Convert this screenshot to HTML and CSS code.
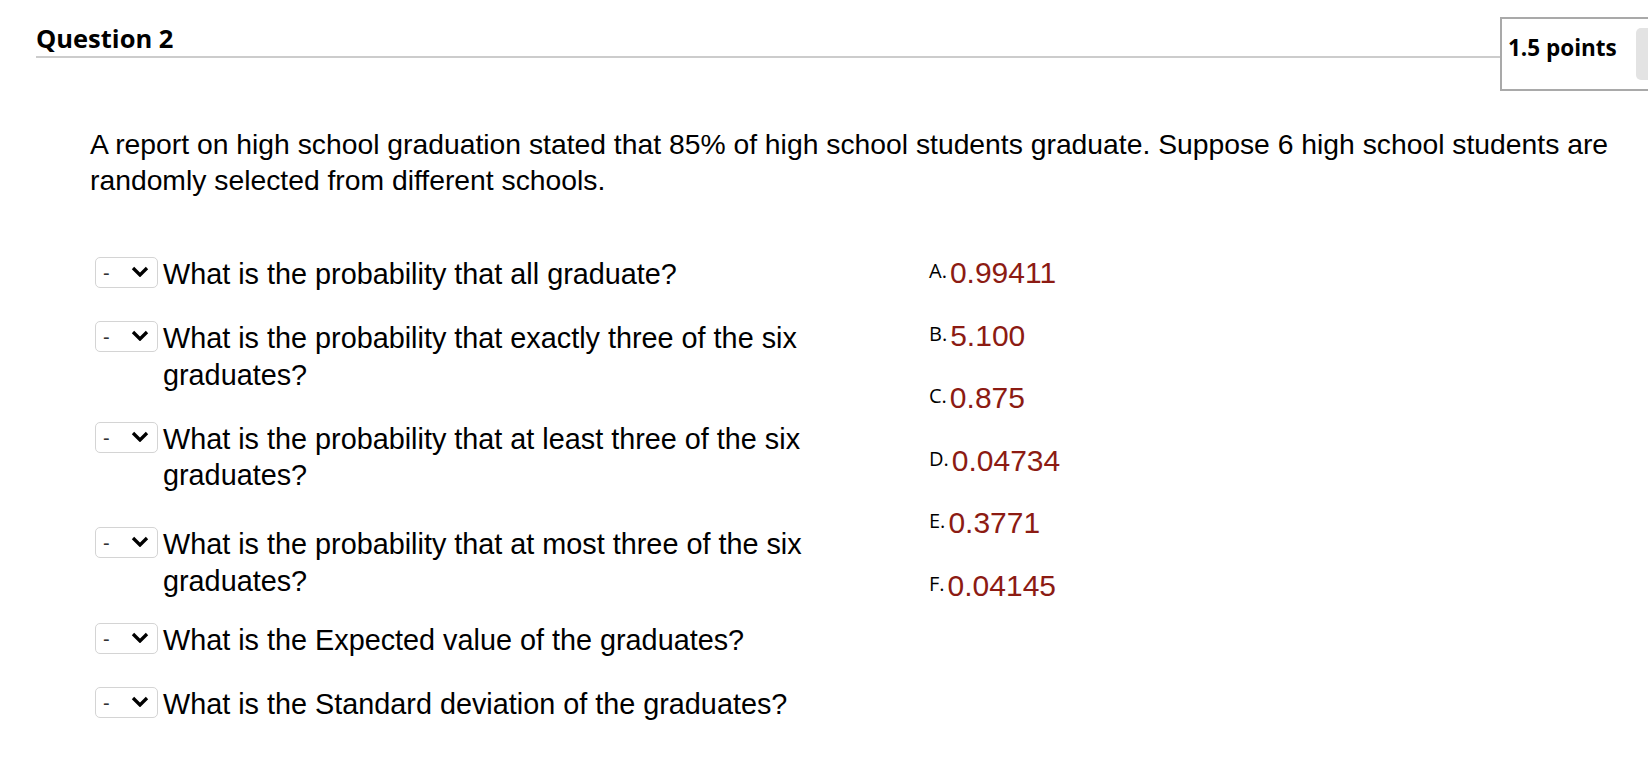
FILE: index.html
```html
<!DOCTYPE html>
<html lang="en">
<head>
<meta charset="utf-8">
<title>Question 2</title>
<link rel="stylesheet" href="styles.css">
</head>
<body>
<header class="qhead">
  <div class="qtitle"><h2>Question 2</h2></div>
  <div class="points"><span class="pts">1.5 points</span><span class="tab"></span></div>
</header>
<main class="qbody">
  <p class="prompt">A report on high school graduation stated that 85% of high school students graduate. Suppose 6 high school students are randomly selected from different schools.</p>
  <div class="match">
    <ul class="items">
      <li class="item"><span class="sel"><span class="dash">-</span><svg class="chev" viewBox="0 0 18 11" width="18" height="11"><path d="M2 2 L9 9 L16 2"/></svg></span><span class="qtext">What is the probability that all graduate?</span></li>
      <li class="item"><span class="sel"><span class="dash">-</span><svg class="chev" viewBox="0 0 18 11" width="18" height="11"><path d="M2 2 L9 9 L16 2"/></svg></span><span class="qtext">What is the probability that exactly three of the six graduates?</span></li>
      <li class="item"><span class="sel"><span class="dash">-</span><svg class="chev" viewBox="0 0 18 11" width="18" height="11"><path d="M2 2 L9 9 L16 2"/></svg></span><span class="qtext">What is the probability that at least three of the six graduates?</span></li>
      <li class="item item--low"><span class="sel"><span class="dash">-</span><svg class="chev" viewBox="0 0 18 11" width="18" height="11"><path d="M2 2 L9 9 L16 2"/></svg></span><span class="qtext">What is the probability that at most three of the six graduates?</span></li>
      <li class="item item--high"><span class="sel"><span class="dash">-</span><svg class="chev" viewBox="0 0 18 11" width="18" height="11"><path d="M2 2 L9 9 L16 2"/></svg></span><span class="qtext">What is the Expected value of the graduates?</span></li>
      <li class="item"><span class="sel"><span class="dash">-</span><svg class="chev" viewBox="0 0 18 11" width="18" height="11"><path d="M2 2 L9 9 L16 2"/></svg></span><span class="qtext">What is the Standard deviation of the graduates?</span></li>
    </ul>
    <ol class="answers">
      <li class="ans"><span class="lbl">A.</span><span class="val">0.99411</span></li>
      <li class="ans"><span class="lbl">B.</span><span class="val">5.100</span></li>
      <li class="ans"><span class="lbl">C.</span><span class="val">0.875</span></li>
      <li class="ans"><span class="lbl">D.</span><span class="val">0.04734</span></li>
      <li class="ans"><span class="lbl">E.</span><span class="val">0.3771</span></li>
      <li class="ans"><span class="lbl">F.</span><span class="val">0.04145</span></li>
    </ol>
  </div>
</main>
</body>
</html>
```
FILE: styles.css
```css
html, body {
  margin: 0;
  padding: 0;
  background: #fff;
  overflow: hidden;
}
body {
  width: 1648px;
  height: 779px;
  font-family: "Liberation Sans", Arial, sans-serif;
  color: #000;
}
.qhead {
  display: flex;
  align-items: flex-start;
  height: 88px;
}
.qtitle {
  flex: 1;
  margin-left: 36px;
  padding: 23px 0 3px;
  border-bottom: 2px solid #cccccc;
}
.qtitle h2 {
  margin: 0;
  font: 700 25.5px/30px "Open Sans", sans-serif;
  color: #000;
}
.points {
  flex: 0 0 148px;
  width: 148px;
  min-width: 0;
  box-sizing: border-box;
  height: 74px;
  margin-top: 17px;
  border: 2px solid #a9a9a9;
  border-right: none;
  padding-left: 6px;
  display: flex;
  align-items: flex-start;
}
.pts {
  font: 700 22.5px/30px "Open Sans", sans-serif;
  padding-top: 14px;
  white-space: nowrap;
  color: #000;
}
.tab {
  flex-shrink: 0;
  width: 40px;
  height: 52px;
  margin: 9px 0 0 19px;
  background: #e3e3e3;
  border-radius: 5px;
}
.qbody {
  padding-left: 90px;
}
.prompt {
  margin: 38px 0 0;
  padding-right: 6px;
  font-size: 28.3px;
  line-height: 36px;
}
.match {
  display: flex;
  align-items: flex-start;
  margin: 58px 0 0 5px;
}
.items {
  list-style: none;
  margin: 0;
  padding: 0;
  width: 760px;
  display: flex;
  flex-direction: column;
  gap: 27.5px;
}
.item {
  display: flex;
  align-items: flex-start;
}
.item--low {
  margin-top: 5px;
}
.item--high {
  margin-top: -5px;
}
.sel {
  flex-shrink: 0;
  box-sizing: border-box;
  width: 63px;
  height: 31px;
  margin-top: 1px;
  padding-left: 7px;
  border: 1px solid #d4d4d4;
  border-radius: 5px;
  display: flex;
  align-items: flex-start;
}
.dash {
  font-size: 20px;
  line-height: 30px;
  color: #333;
}
.chev {
  margin: 8px 0 0 21px;
  fill: none;
  stroke: #000;
  stroke-width: 3.3;
}
.qtext {
  flex: 1;
  margin-left: 5px;
  font-size: 28.8px;
  line-height: 36.5px;
}
.answers {
  list-style: none;
  margin: 0 0 0 74px;
  padding: 0;
  display: flex;
  flex-direction: column;
  gap: 29.6px;
}
.ans {
  font-size: 30px;
  line-height: 33px;
  white-space: nowrap;
}
.lbl {
  font: 20px/1 "Open Sans", sans-serif;
  vertical-align: 5px;
  margin-right: 3px;
  color: #000;
}
.val {
  color: #8c1b13;
}
```
